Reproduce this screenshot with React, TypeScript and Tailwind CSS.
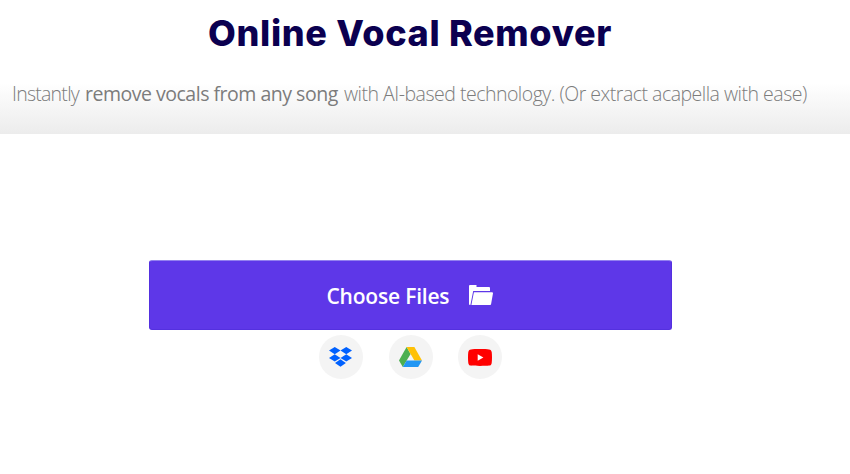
import type { ReactNode } from "react";

function FolderIcon() {
  return (
    <svg width="24" height="20" viewBox="0 0 24 20" fill="white">
      <path d="M0 1a1 1 0 0 1 1-1h6.5v2H20a1 1 0 0 1 1 1v3H4.2L1.4 20H1a1 1 0 0 1-1-1z" />
      <path d="M4.9 7.2H23a1 1 0 0 1 1 1.1l-1.9 10.8a1 1 0 0 1-1 .9H2.4z" />
    </svg>
  );
}

function DropboxIcon() {
  return (
    <svg className="mr-px" width="23" height="20" viewBox="0 0 23 20" fill="#0061ff">
      <path d="M5.75 0 11.5 3.6 5.75 7.2 0 3.6z" />
      <path d="M17.25 0 23 3.6l-5.75 3.6-5.75-3.6z" />
      <path d="m5.75 7.3 5.75 3.6-5.75 3.6L0 10.9z" />
      <path d="M17.25 7.3 23 10.9l-5.75 3.6-5.75-3.6z" />
      <path d="m11.5 12.2 5.4 3.8-5.4 3.8L6 16z" />
    </svg>
  );
}

function DriveIcon() {
  return (
    <svg width="23" height="20" viewBox="0 0 23 20">
      <path fill="#4caf50" d="M7.6 0 11.6 7 3.8 20 0 13.4z" />
      <path fill="#ffc107" d="M7.6 0h7.8L23 13.4h-7.6z" />
      <path fill="#2196f3" d="M7.6 13.4H23L19.2 20H3.8z" />
    </svg>
  );
}

function YoutubeIcon() {
  return (
    <svg width="24" height="17" viewBox="0 0 24 17">
      <path
        fill="#ff0000"
        d="M3 .4C6 0 18 0 21 .4c1.6.2 2.5 1.1 2.7 2.7.4 3 .4 7.8 0 10.8-.2 1.6-1.1 2.5-2.7 2.7-3 .4-15 .4-18 0C1.4 16.4.5 15.5.3 13.9c-.4-3-.4-7.8 0-10.8C.5 1.5 1.4.6 3 .4z"
      />
      <path fill="white" d="M9.7 5.2v6.6l5.7-3.3z" />
    </svg>
  );
}

function SourceButton({ label, children }: { label: string; children: ReactNode }) {
  return (
    <button
      aria-label={label}
      className="flex h-11 w-11 items-center justify-center rounded-full bg-[#f4f4f4]"
    >
      {children}
    </button>
  );
}

export default function App() {
  return (
    <div className="h-[474px] w-[850px] overflow-hidden bg-white">
      <header className="h-[134px] bg-linear-to-b from-white from-62% to-[#ececec] pt-[9px]">
        <h1 className="w-[820px] text-center font-['Inter',sans-serif] text-[36px] leading-[48px] font-extrabold tracking-[0.67px] whitespace-nowrap text-[#0b0050]">
          Online Vocal Remover
        </h1>
        <p className="mt-[23px] flex pl-3 font-['Open_Sans',sans-serif] text-[19.5px] leading-7 font-light whitespace-nowrap text-[#7c7c7c]">
          <span className="w-[73px] tracking-[-0.75px]">Instantly</span>
          <strong className="w-[259px] font-normal tracking-[-0.49px] text-[#7c7c7c]">
            remove vocals from any song
          </strong>
          <span className="tracking-[-0.5px]">
            with AI-based technology. (Or extract acapella with ease)
          </span>
        </p>
      </header>

      <main className="flex w-[821px] flex-col items-center pt-[126px]">
        <button className="flex h-[70px] w-[523px] items-center justify-center gap-5 rounded-[3px] border border-[#5430df] border-t-[#9381ef] bg-[#5e37e8] pr-0.5 font-['Open_Sans',sans-serif] text-[21px] font-semibold whitespace-nowrap text-white">
          <span className="w-[122px] pt-[3px] text-left tracking-[-0.2px]">Choose Files</span>
          <FolderIcon />
        </button>
        <div className="mt-[5px] flex gap-[25.5px]">
          <SourceButton label="Dropbox">
            <DropboxIcon />
          </SourceButton>
          <SourceButton label="Google Drive">
            <DriveIcon />
          </SourceButton>
          <SourceButton label="YouTube">
            <YoutubeIcon />
          </SourceButton>
        </div>
      </main>
    </div>
  );
}
